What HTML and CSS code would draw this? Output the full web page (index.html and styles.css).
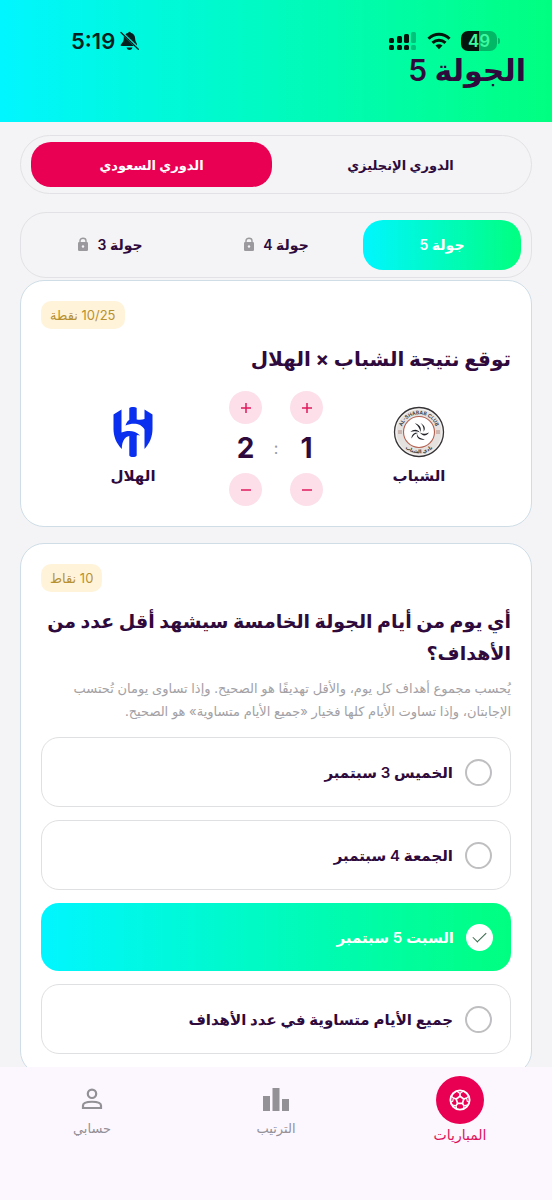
FILE: index.html
```html
<!DOCTYPE html>
<html lang="ar" dir="rtl">
<head>
    <meta charset="UTF-8">
    <meta name="viewport" content="width=device-width, initial-scale=1">
    <title>الجولة 5</title>
    <link rel="stylesheet" href="styles.css">
</head>
<body>
<header class="header">
    <div class="status" dir="ltr">
        <div class="status-left">
            <span class="time">5:19</span>
            <svg width="21" height="20" viewBox="0 0 20 20" fill="#04211f">
                <path d="M6 3.600C6.800 2.400 7.800 2 8.800 1.800C9 .5 11 .5 11.200 1.800C14 2.300 15.500 4.500 15.600 7.200C15.700 9.500 16.300 11 17.300 12.400L17.500 14.600Z"/>
                <path d="M4.300 5.200L14.200 15H2C1 15 .9 13.900 1.600 13.200C3.500 11.300 4.200 9.800 4.300 7.500Z"/>
                <path d="M7 16.400H13C12.300 18.200 11.300 18.900 10 18.900C8.700 18.900 7.700 18.200 7 16.400Z"/>
                <path d="M1.500 1.500L18.800 18.300" fill="none" stroke="#04211f" stroke-width="1.300" stroke-linecap="round"/>
            </svg>
        </div>
        <div class="status-right">
            <svg width="28" height="20" viewBox="0 0 28 20" fill="#03150d">
                <rect x="0" y="7" width="5" height="5" rx="1.500"/>
                <rect x="8" y="5" width="5" height="7" rx="1.500"/>
                <rect x="15" y="3" width="5" height="9" rx="1.500"/>
                <rect x="22" y="1" width="5" height="11" rx="1.500" opacity=".25"/>
                <rect x="0" y="14" width="5" height="5" rx="1.500"/>
                <rect x="8" y="14" width="5" height="5" rx="1.500"/>
                <rect x="15" y="14" width="5" height="5" rx="1.500"/>
                <rect x="22" y="14" width="5" height="5" rx="1.500" opacity=".25"/>
            </svg>
            <svg width="24" height="18" viewBox="0 0 24 18" fill="none" stroke="#03150d" stroke-width="3">
                <path d="M1.500 6.700C7.500 .8 16.500 .8 22.500 6.700"/>
                <path d="M5.500 10.900C9.300 7.300 14.700 7.300 18.500 10.900"/>
                <path d="M8.500 13.600C10.500 11.900 13.500 11.900 15.500 13.600L12 17.200Z" fill="#03150d" stroke="none"/>
            </svg>
            <div class="battery">
                <span>49</span>
            </div>
        </div>
    </div>
    <h1>الجولة 5</h1>
</header>

<main class="content">
    <div class="tabs leagues">
        <button type="button" class="tab">الدوري الإنجليزي</button>
        <button type="button" class="tab active">الدوري السعودي</button>
    </div>
    <div class="tabs rounds">
        <button type="button" class="tab active">جولة 5</button>
        <button type="button" class="tab">جولة 4
            <svg width="12" height="14" viewBox="0 0 12 14"><path d="M3 6V3.800C3 .4 9 .4 9 3.800V6" fill="none" stroke="#9b999d" stroke-width="1.400"/><rect x="1" y="5" width="10" height="9" rx="1.300" fill="#9b999d"/><circle cx="6" cy="9.500" r="1.200" fill="#f4f4f6"/></svg>
        </button>
        <button type="button" class="tab">جولة 3
            <svg width="12" height="14" viewBox="0 0 12 14"><path d="M3 6V3.800C3 .4 9 .4 9 3.800V6" fill="none" stroke="#9b999d" stroke-width="1.400"/><rect x="1" y="5" width="10" height="9" rx="1.300" fill="#9b999d"/><circle cx="6" cy="9.500" r="1.200" fill="#f4f4f6"/></svg>
        </button>
    </div>

    <section class="card match-card">
        <span class="badge">10/25 نقطة</span>
        <h2>توقع نتيجة الشباب × الهلال</h2>
        <div class="match">
            <div class="team">
                <svg width="52" height="52" viewBox="0 0 52 52">
                    <circle cx="26" cy="26" r="24.500" fill="#e4e1df" stroke="#353335" stroke-width="1.300"/>
                    <circle cx="26" cy="26" r="23" fill="none" stroke="#fff" stroke-width=".6"/>
                    <circle cx="26" cy="26" r="15.500" fill="#fff" stroke="#b5604f" stroke-width="1.100"/>
                    <path id="arcTop" d="M8.300 26A17.700 17.700 0 0 1 43.700 26" fill="none"/>
                    <path id="arcBottom" d="M4.800 26A21.200 21.200 0 0 0 47.200 26" fill="none"/>
                    <text class="crest-text" direction="ltr"><textPath href="#arcTop" startOffset="50%">AL-SHABAB CLUB</textPath></text>
                    <text class="crest-text" direction="ltr"><textPath href="#arcBottom" startOffset="50%">نادي الشباب</textPath></text>
                    <path d="M5 25H9M5 27H9M43 25H47M43 27H47" stroke="#a77367" stroke-width=".8"/>
                    <g fill="#202227">
                        <path d="M21.800 17.200C26.500 18.600 29 21.800 27.300 26C26.800 22.500 25.500 20 21.800 17.200Z"/>
                        <path d="M27.500 17C31.800 19.300 33 22.600 30.600 25.800C31 22.400 30.300 19.800 27.500 17Z"/>
                        <path d="M17.300 25.800C20.800 23 24.500 23 26.800 26.400C23.800 24.900 21.200 24.800 17.300 25.800Z"/>
                        <path d="M18.500 32.500C18.500 28.800 21.300 25.800 25 27C21.900 27.700 20.200 29.300 18.500 32.500Z"/>
                        <path d="M24 27.500C24.500 30.900 27 32.800 31.800 33.200C27.500 35 23 32 24 27.500Z"/>
                        <path d="M27 26.600C29.800 28.400 32.300 28.200 36 26.500C33.600 30.200 29.200 30.500 27 26.600Z"/>
                    </g>
                </svg>
                <span>الشباب</span>
            </div>
            <div class="stepper">
                <button type="button" aria-label="زيادة أهداف الشباب"><svg width="12" height="12" viewBox="0 0 12 12"><path d="M1 6H11M6 1V11"/></svg></button>
                <output>1</output>
                <button type="button" aria-label="إنقاص أهداف الشباب"><svg width="12" height="12" viewBox="0 0 12 12"><path d="M1 6H11"/></svg></button>
            </div>
            <span class="colon">:</span>
            <div class="stepper">
                <button type="button" aria-label="زيادة أهداف الهلال"><svg width="12" height="12" viewBox="0 0 12 12"><path d="M1 6H11M6 1V11"/></svg></button>
                <output>2</output>
                <button type="button" aria-label="إنقاص أهداف الهلال"><svg width="12" height="12" viewBox="0 0 12 12"><path d="M1 6H11"/></svg></button>
            </div>
            <div class="team">
                <svg width="52" height="52" viewBox="0 0 52 52" fill="#0a2fee">
                    <path d="M6.500 8.500L14.500 3.500V26.500C19 24.500 28 23.500 33 29.500C31 28.800 30 28.800 29.700 29.500V49.500C28.500 51.500 23.500 51.500 22.300 49.500V30C17.500 31 15 35 14.800 43C9 37 6.500 30 6.500 23Z"/>
                    <path d="M22.300 2C24 .7 28 .7 29.700 2V13.500C33 14 35.500 13.800 37.500 13V3.500L45.500 8.500V23C45.500 30 43 37 37.500 43V23.500C34 17 26 16.500 18.500 19.500C19.500 16.500 20.500 15 22.300 14Z"/>
                </svg>
                <span>الهلال</span>
            </div>
        </div>
    </section>

    <section class="card">
        <span class="badge">10 نقاط</span>
        <h2>أي يوم من أيام الجولة الخامسة سيشهد أقل عدد من الأهداف؟</h2>
        <p class="hint">يُحسب مجموع أهداف كل يوم، والأقل تهديفًا هو الصحيح. وإذا تساوى يومان تُحتسب الإجابتان، وإذا تساوت الأيام كلها فخيار «جميع الأيام متساوية» هو الصحيح.</p>
        <div class="options">
            <label class="option"><input type="radio" name="day">الخميس 3 سبتمبر</label>
            <label class="option"><input type="radio" name="day">الجمعة 4 سبتمبر</label>
            <label class="option selected"><input type="radio" name="day" checked>السبت 5 سبتمبر</label>
            <label class="option"><input type="radio" name="day">جميع الأيام متساوية في عدد الأهداف</label>
        </div>
    </section>
</main>

<nav class="bottom-nav">
    <a href="#" class="current">
        <span class="ball">
            <svg width="22" height="22" viewBox="0 0 22 22" fill="none" stroke="#fff" stroke-linejoin="round">
                <circle cx="11" cy="11" r="9.600" stroke-width="1.900"/>
                <path d="M11 7.200L14.800 10L13.400 14.400H8.600L7.200 10Z" stroke-width="1.700"/>
                <path d="M11 7.200V4.400M14.800 10L17.600 9M13.400 14.400L15 16.800M8.600 14.400L7 16.800M7.200 10L4.400 9" stroke-width="1.700"/>
                <path d="M8 2.300L11 4.400L14 2.300M19.800 7L17.600 9L18.300 12.500L20.300 12.800M14.300 19.500L15 16.800L18 16M7.700 19.500L7 16.800L4 16M1.700 12.800L3.700 12.500L4.400 9L2.200 7" stroke-width="1.200"/>
            </svg>
        </span>
        المباريات
    </a>
    <a href="#">
        <svg width="26" height="24" viewBox="0 0 26 24" fill="#939096"><path d="M0 9H7V24H0ZM9.500 1H16.500V24H9.500ZM19 12H26V24H19Z"/></svg>
        الترتيب
    </a>
    <a href="#">
        <svg width="22" height="24" viewBox="0 0 22 24" fill="none" stroke="#939096" stroke-width="2.200"><circle cx="11" cy="6.800" r="4.200"/><path d="M2 21V18.500C2 13.500 20 13.500 20 18.500V21Z"/></svg>
        حسابي
    </a>
</nav>
</body>
</html>
```
FILE: styles.css
```css
*{
    margin: 0;
    padding: 0;
    box-sizing: border-box;
}
body{
    display: flex;
    flex-direction: column;
    height: 100vh;
    background: #f4f4f6;
    color: #2f0a3c;
    font-family: Inter, "DejaVu Sans", sans-serif;
    font-size: 14px;
}
button{
    border: 0;
    background: none;
    color: inherit;
    font: inherit;
    cursor: pointer;
}
svg{
    flex: none;
}

/* header */
.header{
    flex: none;
    padding: 28px 26px 36px;
    background: linear-gradient(90deg, #00f6ff, #00ff80);
}
.status{
    display: flex;
    justify-content: space-between;
    align-items: center;
    height: 26px;
    padding: 0 26px 0 45px;
}
.status-left,.status-right{
    display: flex;
    align-items: center;
}
.status-left{
    gap: 4px;
}
.status-right{
    gap: 10px;
}
.time{
    color: #04211f;
    font-size: 22px;
    font-weight: 600;
}
.battery{
    display: flex;
    align-items: center;
}
.battery span{
    width: 36px;
    border-radius: 7px;
    background: linear-gradient(90deg, #03150d 50%, #02b867 50%);
    color: #3dfaa0;
    font-size: 17px;
    font-weight: 600;
    line-height: 20px;
    text-align: center;
}
.battery::after{
    content: "";
    width: 2px;
    height: 6px;
    margin-left: 1px;
    border-radius: 0 2px 2px 0;
    background: #02b867;
}
h1{
    font-size: 30px;
    font-weight: 600;
    line-height: 32px;
}

/* content */
.content{
    flex: 1;
    min-height: 0;
    padding: 13px 20px 0;
    overflow-y: auto;
    scrollbar-width: none;
}
.tabs{
    display: flex;
    gap: 8px;
    padding: 6px 10px;
    border: 1px solid #e2e1e5;
    border-radius: 30px;
}
.tab{
    display: flex;
    flex: 1;
    justify-content: center;
    align-items: center;
    gap: 8px;
    height: 45px;
    border-radius: 20px;
    font-weight: 600;
}
.tab.active{
    background: #e90052;
    color: #fff;
}
.leagues{
    margin-bottom: 18px;
}
.leagues .tab{
    font-size: 13px;
}
.rounds{
    margin-bottom: 2px;
    padding: 7px 10px;
    border-radius: 26px;
}
.rounds .tab{
    height: 50px;
    padding-bottom: 2px;
}
.rounds .active{
    background: linear-gradient(90deg, #00f6ff, #00ff80);
}
.card{
    display: flex;
    flex-direction: column;
    margin-bottom: 16px;
    padding: 20px;
    border: 1px solid #cfdde6;
    border-radius: 24px;
    background: #fff;
}
.badge{
    align-self: flex-end;
    padding: 0 9px;
    border-radius: 10px;
    background: #fff3da;
    color: #b8912f;
    font-size: 13px;
    line-height: 28px;
}
h2{
    margin-top: 14px;
    font-size: 19px;
    line-height: 32px;
}
.match-card h2{
    font-size: 20px;
}

/* score prediction */
.match{
    display: flex;
    gap: 4px;
    margin-top: 16px;
}
.team{
    display: flex;
    flex: 1;
    flex-direction: column;
    align-items: center;
    gap: 6px;
    padding-top: 15px;
    font-size: 15px;
    font-weight: 600;
    line-height: 24px;
}
.crest-text{
    fill: #333;
    font-size: 5px;
    font-weight: 600;
    text-anchor: middle;
}
.stepper{
    display: flex;
    flex-direction: column;
    align-items: center;
}
.stepper button{
    display: flex;
    justify-content: center;
    align-items: center;
    width: 33px;
    height: 33px;
    border-radius: 50%;
    background: #fcdfe9;
}
.stepper path{
    stroke: #e01a5c;
    stroke-width: 1.5;
}
.stepper output{
    font-size: 28px;
    font-weight: 700;
    line-height: 49px;
}
.colon{
    width: 20px;
    color: #9b999d;
    font-size: 16px;
    line-height: 115px;
    text-align: center;
}

/* question */
.hint{
    margin-top: 7px;
    color: #a3a1a5;
    font-size: 13px;
    line-height: 23px;
}
.options{
    display: flex;
    flex-direction: column;
    gap: 13px;
    margin-top: 14px;
}
.option{
    display: flex;
    align-items: center;
    gap: 12px;
    min-height: 70px;
    padding: 0 18px;
    border: 1px solid #dfe0e2;
    border-radius: 18px;
    font-size: 15px;
    font-weight: 600;
    cursor: pointer;
}
.option input{
    appearance: none;
    display: grid;
    place-items: center;
    width: 27px;
    height: 27px;
    border: 2px solid #bfbfc1;
    border-radius: 50%;
    background: #fff;
}
.option.selected{
    min-height: 68px;
    border: 0;
    background: linear-gradient(90deg, #00f6ff, #00ff80);
    color: #fff;
}
.option input:checked{
    border-color: #fff;
}
.option input:checked::after{
    content: "";
    width: 12px;
    height: 6px;
    margin-bottom: 4px;
    border: solid #37684a;
    border-width: 0 0 1px 1px;
    transform: rotate(-45deg);
}

/* bottom navigation */
.bottom-nav{
    display: flex;
    flex: none;
    height: 133px;
    background: #fcf7ff;
}
.bottom-nav a{
    display: flex;
    flex: 1;
    flex-direction: column;
    align-items: center;
    gap: 6px;
    padding-top: 20px;
    color: #939096;
    font-size: 13px;
    line-height: 22px;
    text-decoration: none;
}
.bottom-nav .current{
    gap: 0;
    padding-top: 9px;
    color: #e0125a;
    font-size: 14px;
}
.ball{
    display: flex;
    justify-content: center;
    align-items: center;
    width: 48px;
    height: 48px;
    border-radius: 50%;
    background: #e90052;
}
```
